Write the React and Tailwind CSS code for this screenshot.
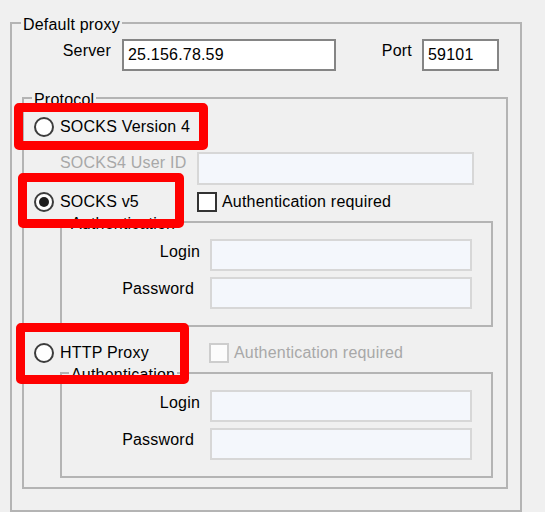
import clsx from 'clsx';

const font = { fontFamily: '"Liberation Sans", Arial, sans-serif' };

function Radio({ checked }) {
  return (
    <span className="flex h-[20px] w-[20px] shrink-0 items-center justify-center rounded-full border-2 border-[#3c3c3c] bg-white">
      {checked && <span className="h-[10px] w-[10px] rounded-full bg-[#1e1e1e]" />}
    </span>
  );
}

function Check({ disabled }) {
  return (
    <span
      className={clsx(
        'h-[20px] w-[20px] shrink-0 border-2',
        disabled ? 'border-[#cdcdcd] bg-[#fcfcfc]' : 'border-[#333333] bg-white'
      )}
    />
  );
}

function TextBox({ value, className, disabled }) {
  return (
    <div
      className={clsx(
        'flex h-[32px] shrink-0 items-center border-2 px-[4px] leading-5',
        disabled ? 'border-[#d7d7d7] bg-[#f4f7fc]' : 'border-[#858585] bg-white',
        className
      )}
    >
      {value}
    </div>
  );
}

function Legend({ children, className }) {
  return <legend className={clsx('px-[2px] pt-[4px] leading-5', className)}>{children}</legend>;
}

function AuthGroup() {
  return (
    <fieldset className="ml-[36px] -mt-[2px] h-[117px] w-[433px] border-2 border-[#b4b4b4]">
      <Legend className="ml-[7px]">Authentication</Legend>
      <div className="mt-[5px] flex items-start">
        <span className="w-[138px] pt-[1px] text-right">Login</span>
        <TextBox className="ml-[10px] w-[262px]" disabled />
      </div>
      <div className="mt-[6px] flex items-start">
        <span className="w-[132px] text-right">Password</span>
        <TextBox className="ml-[16px] w-[262px]" disabled />
      </div>
    </fieldset>
  );
}

function Mark({ className }) {
  return (
    <div
      className={clsx(
        'pointer-events-none absolute rounded-[5px] border-[9px] border-[#ff0000]',
        className
      )}
    />
  );
}

export default function App() {
  return (
    <div
      className="relative h-[512px] w-[545px] overflow-hidden bg-[#f0f0f0] pt-[11px] text-[16px] tracking-[0.2px] text-black"
      style={font}
    >
      <fieldset className="ml-[10px] h-[501px] w-[512px] border-2 border-[#b4b4b4]">
        <Legend className="ml-[9px]">Default proxy</Legend>

        <div className="mt-[4px] flex items-start">
          <span className="w-[99px] pt-[2px] text-right leading-5">Server</span>
          <TextBox value="25.156.78.59" className="ml-[11px] w-[214px]" />
          <span className="w-[76px] pt-[2px] text-right leading-5">Port</span>
          <TextBox value="59101" className="ml-[10px] w-[77px]" />
        </div>

        <fieldset className="ml-[10px] mt-[15px] h-[403px] w-[486px] border-2 border-[#b4b4b4]">
          <Legend className="ml-[8px]">Protocol</Legend>

          <div className="ml-[10px] mt-[7px] flex h-[20px] items-center">
            <Radio />
            <span className="ml-[6px] leading-5">SOCKS Version 4</span>
          </div>

          <div className="ml-[36px] mt-[15px] flex items-start">
            <span className="w-[137px] pt-[1px] leading-5 text-[#a8a8a8]">SOCKS4 User ID</span>
            <TextBox className="h-[33px] w-[277px]" disabled />
          </div>

          <div className="ml-[10px] mt-[7px] flex h-[20px] items-center">
            <Radio checked />
            <span className="ml-[6px] w-[137px] leading-5">SOCKS v5</span>
            <Check />
            <span className="ml-[5px] leading-5">Authentication required</span>
          </div>

          <AuthGroup />

          <div className="ml-[10px] mt-[16px] flex h-[20px] items-center">
            <Radio />
            <span className="ml-[6px] w-[149px] leading-5">HTTP Proxy</span>
            <Check disabled />
            <span className="ml-[5px] leading-5 text-[#a8a8a8]">Authentication required</span>
          </div>

          <AuthGroup />
        </fieldset>
      </fieldset>

      <Mark className="left-[14px] top-[103px] h-[47px] w-[194px]" />
      <Mark className="left-[18px] top-[173px] h-[55px] w-[166px]" />
      <Mark className="left-[16px] top-[323px] h-[61px] w-[173px]" />
    </div>
  );
}
